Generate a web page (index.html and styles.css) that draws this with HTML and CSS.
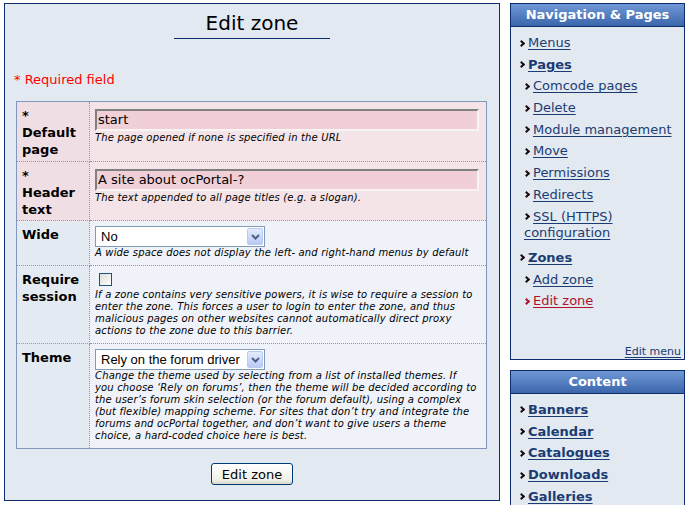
FILE: index.html
```html
<!DOCTYPE html>
<html>
<head>
<meta charset="utf-8">
<title>Edit zone</title>
<link rel="stylesheet" href="styles.css">
</head>
<body>
<div class="page">
  <div class="main">
    <h1 class="title"><span>Edit zone</span></h1>
    <p class="req">* Required field</p>
    <table class="form">
      <colgroup><col class="c1"><col class="c2"></colgroup>
      <tr class="required">
        <th>*<br>Default page</th>
        <td>
          <div class="input">start</div>
          <div class="help">The page opened if none is specified in the URL</div>
        </td>
      </tr>
      <tr class="required">
        <th>*<br>Header text</th>
        <td>
          <div class="input">A site about ocPortal-?</div>
          <div class="help">The text appended to all page titles (e.g. a slogan).</div>
        </td>
      </tr>
      <tr>
        <th>Wide</th>
        <td>
          <div class="select"><span class="val">No</span><span class="arrow"><svg width="9" height="6" viewBox="0 0 9 6"><path d="M1 1 L4.5 4.5 L8 1" fill="none" stroke="#4d6185" stroke-width="2"/></svg></span></div>
          <div class="help">A wide space does not display the left- and right-hand menus by default</div>
        </td>
      </tr>
      <tr>
        <th>Require session</th>
        <td>
          <div class="check"></div>
          <div class="help">If a zone contains very sensitive powers, it is wise to require a session to<br>enter the zone. This forces a user to login to enter the zone, and thus<br>malicious pages on other websites cannot automatically direct proxy<br>actions to the zone due to this barrier.</div>
        </td>
      </tr>
      <tr>
        <th>Theme</th>
        <td>
          <div class="select"><span class="val">Rely on the forum driver</span><span class="arrow"><svg width="9" height="6" viewBox="0 0 9 6"><path d="M1 1 L4.5 4.5 L8 1" fill="none" stroke="#4d6185" stroke-width="2"/></svg></span></div>
          <div class="help">Change the theme used by selecting from a list of installed themes. If<br>you choose ‘Rely on forums’, then the theme will be decided according to<br>the user’s forum skin selection (or the forum default), using a complex<br>(but flexible) mapping scheme. For sites that don’t try and integrate the<br>forums and ocPortal together, and don’t want to give users a theme<br>choice, a hard-coded choice here is best.</div>
        </td>
      </tr>
    </table>
    <div class="actions"><button class="btn">Edit zone</button></div>
  </div>

  <div class="side">
    <div class="box">
      <div class="box-head">Navigation &amp; Pages</div>
      <ul class="nav">
        <li class="l1"><a href="#">Menus</a></li>
        <li class="l1 strong"><a href="#">Pages</a></li>
        <li class="l2"><a href="#">Comcode pages</a></li>
        <li class="l2"><a href="#">Delete</a></li>
        <li class="l2"><a href="#">Module management</a></li>
        <li class="l2"><a href="#">Move</a></li>
        <li class="l2"><a href="#">Permissions</a></li>
        <li class="l2"><a href="#">Redirects</a></li>
        <li class="l2"><a href="#">SSL (HTTPS) configuration</a></li>
        <li class="l1 strong group"><a href="#">Zones</a></li>
        <li class="l2"><a href="#">Add zone</a></li>
        <li class="l2 active"><a href="#">Edit zone</a></li>
      </ul>
      <div class="edit-menu"><a href="#">Edit menu</a></div>
    </div>
    <div class="box box2">
      <div class="box-head">Content</div>
      <ul class="nav">
        <li class="l1 strong"><a href="#">Banners</a></li>
        <li class="l1 strong"><a href="#">Calendar</a></li>
        <li class="l1 strong"><a href="#">Catalogues</a></li>
        <li class="l1 strong"><a href="#">Downloads</a></li>
        <li class="l1 strong"><a href="#">Galleries</a></li>
      </ul>
    </div>
  </div>
</div>
</body>
</html>
```

FILE: styles.css
```css
html, body {
  margin: 0;
  padding: 0;
  background: #ffffff;
  overflow: hidden;
}
body {
  font-family: "DejaVu Sans", Verdana, sans-serif;
  font-size: 13px;
  color: #000;
}
.page {
  display: flex;
  align-items: flex-start;
  gap: 10px;
  padding: 3px 0 0 4px;
}
.main {
  box-sizing: border-box;
  width: 496px;
  height: 498px;
  border: 1px solid #0e2d6e;
  background: #e2e9f1;
}
.title {
  margin: 8px 0 0;
  text-align: center;
  font-size: 20px;
  font-weight: normal;
  line-height: 23px;
}
.title span {
  display: inline-block;
  width: 156px;
  padding-bottom: 3px;
  border-bottom: 1px solid #0e2d6e;
}
.req {
  margin: 33px 0 0 9px;
  color: #ff0000;
  font-size: 13px;
  line-height: 16px;
}
.form {
  margin: 13px 0 0 11px;
  width: 471px;
  border-collapse: collapse;
  table-layout: fixed;
  border: 1px solid #8297bd;
}
.form col.c1 { width: 73px; }
.form th, .form td {
  border: 1px dotted #8698bf;
  vertical-align: top;
  text-align: left;
  padding: 5px 6px 6px 5px;
}
.form th {
  font-weight: bold;
  font-size: 13px;
  line-height: 17px;
  background: #e4eaf2;
  padding: 5px 3px 2.5px 5px;
}
.form td {
  background: #eff3f9;
}
.form tr.required th { background: #efdfe5; }
.form tr.required td { background: #f4e4e8; }
.input {
  box-sizing: border-box;
  width: 384px;
  height: 22px;
  margin-top: 2px;
  border-style: solid;
  border-width: 2px;
  border-color: #808080 #f8f4f4 #f8f4f4 #808080;
  background: #f1cfd6;
  padding: 0 0 0 1px;
  font-size: 13px;
  line-height: 18px;
}
.help {
  font-style: italic;
  font-size: 10px;
  letter-spacing: 0.16px;
  line-height: 12px;
}
.input + .help { margin-top: 1px; }
.select {
  box-sizing: border-box;
  width: 170px;
  height: 21px;
  border: 1px solid #7f9db9;
  background: #fff;
  display: flex;
  align-items: center;
  justify-content: space-between;
  padding: 0 1px 0 5px;
  font-family: "Liberation Sans", Arial, sans-serif;
  font-size: 13px;
}
.arrow {
  box-sizing: border-box;
  width: 16px;
  height: 17px;
  border: 1px solid #b8cbf2;
  border-radius: 2px;
  background: linear-gradient(#e3ebfd, #b9cbf5);
  display: flex;
  align-items: center;
  justify-content: center;
}
.check {
  box-sizing: border-box;
  width: 13px;
  height: 13px;
  margin: 2px 0 3px 4px;
  border: 1px solid #1c5180;
  background: linear-gradient(135deg, #dcdcd7, #ffffff);
}
.actions {
  margin-top: 14px;
  text-align: center;
}
.btn {
  box-sizing: border-box;
  width: 82px;
  height: 22px;
  padding: 0;
  border: 1px solid #003c74;
  border-radius: 3px;
  background: linear-gradient(#ffffff, #f0f0ea 80%, #d8d6c8);
  font-family: "DejaVu Sans", Verdana, sans-serif;
  font-size: 13px;
  color: #000;
}

/* sidebar */
.side {
  width: 175px;
  display: flex;
  flex-direction: column;
  gap: 10px;
}
.box {
  border: 1px solid #0e2d6e;
  background: #e2e9f1;
}
.box-head {
  height: 22px;
  line-height: 21px;
  border-bottom: 1px solid #0e2d6e;
  background: linear-gradient(#7098d6, #3b66aa);
  color: #fff;
  font-weight: bold;
  font-size: 13px;
  text-align: center;
}
.nav {
  list-style: none;
  margin: 0;
  padding: 5px 0 0;
}
.nav li {
  line-height: 16px;
  padding: 3px 4px 2.7px 8px;
}
.nav li.l2 { padding-left: 13px; }
.nav li.group { margin-top: 3.7px; }
.nav li::before {
  content: "";
  display: inline-block;
  width: 3px;
  height: 3px;
  border-top: 2px solid #1c0c0c;
  border-right: 2px solid #1c0c0c;
  transform: rotate(45deg);
  margin: 0 4px 1px 0;
  vertical-align: middle;
}
.nav a {
  color: #1b3c73;
  text-decoration: underline;
  text-underline-offset: 2px;
}
.nav li.strong a { font-weight: bold; }
.nav li.active a { color: #b0122c; }
.nav li.active::before { border-color: #b0122c; }
.edit-menu {
  margin-top: 33px;
  padding: 0 3px 1px 0;
  text-align: right;
  font-size: 11px;
  line-height: 13px;
}
.edit-menu a {
  color: #1b3c73;
  text-underline-offset: 2px;
}
```
